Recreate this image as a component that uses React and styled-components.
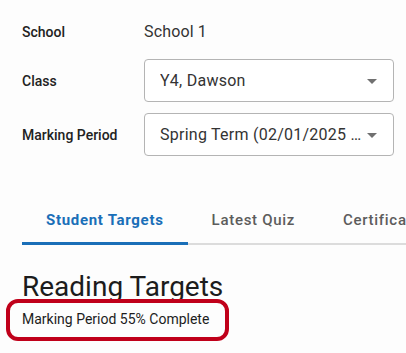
import React, { useState } from 'react';
import styled, { createGlobalStyle } from 'styled-components';

const GlobalStyle = createGlobalStyle`
  html, body {
    margin: 0;
    padding: 0;
    background: #fdfdfd;
    font-family: Roboto, 'Liberation Sans', sans-serif;
    overflow: hidden;
  }
`;

const Page = styled.div`
  padding: 15px 0 0 22px;
`;

const Filters = styled.div`
  display: grid;
  grid-template-columns: 122px 250px;
  grid-auto-rows: 43px;
  grid-template-rows: 33px;
  row-gap: 11px;
  align-items: center;
`;

const Label = styled.div`
  font-size: 14px;
  font-weight: 500;
  color: #222;
`;

const Value = styled.div`
  font-size: 16px;
  letter-spacing: 0.15px;
  color: #333;
`;

const SelectBox = styled.div`
  position: relative;
  box-sizing: border-box;
  height: 43px;
  display: flex;
  align-items: center;
  padding: 0 29px 0 15px;
  border: 1px solid #b4b4b4;
  border-radius: 4px;
  background: #fff;
  font-size: 16px;
  letter-spacing: 0.25px;
  color: #333;
  cursor: pointer;

  span {
    overflow: hidden;
    white-space: nowrap;
    text-overflow: ellipsis;
  }

  svg {
    position: absolute;
    right: 9px;
    top: 50%;
    transform: translateY(-50%);
  }
`;

const TabList = styled.div`
  display: flex;
  margin-top: 41px;
  box-shadow: inset 0 -2px 0 #dcdcdc;
  white-space: nowrap;
`;

const Tab = styled.button`
  flex: none;
  box-sizing: border-box;
  height: 48px;
  padding: 0 24px;
  border: 0;
  border-bottom: 3px solid ${({ $active }) => ($active ? '#1a6fb8' : 'transparent')};
  background: none;
  font-family: inherit;
  font-size: 15px;
  font-weight: ${({ $active }) => ($active ? 700 : 500)};
  letter-spacing: 0.7px;
  color: ${({ $active }) => ($active ? '#1a6fb8' : '#5c5c5c')};
  cursor: pointer;
`;

const Heading = styled.h2`
  margin: 26px 0 0;
  font-size: 28px;
  font-weight: 400;
  line-height: 32px;
  color: #1c1c1c;
`;

const Progress = styled.div`
  position: relative;
  display: inline-block;
  margin: -4px 0 0 -16px;
  padding: 6px 16px 8px 12px;
  border: 4px solid #c0001a;
  border-radius: 12px;
  font-size: 14px;
  line-height: 20px;
  color: #1c1c1c;
`;

const Arrow = () => (
  <svg width="24" height="24" viewBox="0 0 24 24" fill="#707070">
    <path d="M7 10l5 5 5-5z" />
  </svg>
);

const tabs = ['Student Targets', 'Latest Quiz', 'Certificates'];

export default function App() {
  const [active, setActive] = useState(0);

  return (
    <>
      <GlobalStyle />
      <Page>
        <Filters>
          <Label>School</Label>
          <Value>School 1</Value>
          <Label>Class</Label>
          <SelectBox>
            <span>Y4, Dawson</span>
            <Arrow />
          </SelectBox>
          <Label>Marking Period</Label>
          <SelectBox>
            <span>Spring Term (02/01/2025 - 04/30/2025)</span>
            <Arrow />
          </SelectBox>
        </Filters>

        <TabList>
          {tabs.map((t, i) => (
            <Tab key={t} $active={i === active} onClick={() => setActive(i)}>
              {t}
            </Tab>
          ))}
        </TabList>

        <Heading>Reading Targets</Heading>
        <Progress>Marking Period 55% Complete</Progress>
      </Page>
    </>
  );
}
